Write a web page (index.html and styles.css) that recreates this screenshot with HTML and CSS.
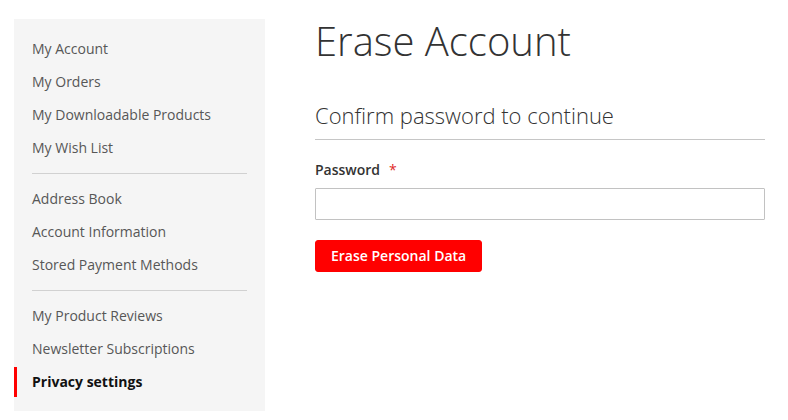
FILE: index.html
```html
<!DOCTYPE html>
<html lang="en">
<head>
<meta charset="utf-8">
<title>Erase Account</title>
<link rel="stylesheet" href="styles.css">
</head>
<body>
<div class="page">
  <aside class="sidebar">
    <ul class="nav">
      <li class="item"><a href="#">My Account</a></li>
      <li class="item"><a href="#">My Orders</a></li>
      <li class="item"><a href="#">My Downloadable Products</a></li>
      <li class="item"><a href="#">My Wish List</a></li>
      <li class="delimiter"></li>
      <li class="item"><a href="#">Address Book</a></li>
      <li class="item"><a href="#">Account Information</a></li>
      <li class="item"><a href="#">Stored Payment Methods</a></li>
      <li class="delimiter"></li>
      <li class="item"><a href="#">My Product Reviews</a></li>
      <li class="item"><a href="#">Newsletter Subscriptions</a></li>
      <li class="item current"><strong>Privacy settings</strong></li>
    </ul>
  </aside>
  <main class="main">
    <h1 class="page-title">Erase Account</h1>
    <div class="block-title">Confirm password to continue</div>
    <form class="form">
      <label class="label" for="pw">Password<span class="req">*</span></label>
      <input class="input" id="pw" type="password">
      <button class="btn" type="button">Erase Personal Data</button>
    </form>
  </main>
</div>
</body>
</html>
```
FILE: styles.css
```css
* { box-sizing: border-box; }
html, body { margin: 0; padding: 0; background: #fff; }
body {
  font-family: "Open Sans", "Liberation Sans", sans-serif;
  font-size: 14px;
  line-height: 20px;
  color: #333;
}
.page {
  display: flex;
  align-items: flex-start;
  padding: 19px 23px 0 14px;
  gap: 50px;
}
.sidebar {
  width: 251px;
  flex: none;
  background: #f5f5f5;
  padding: 15px 0 14px;
}
.nav {
  list-style: none;
  margin: 0;
  padding: 0;
  display: flex;
  flex-direction: column;
}
.item {
  margin: 0 0 3px;
}
.item:last-child { margin-bottom: 0; }
.item a, .item strong {
  display: block;
  padding: 5px 18px 5px 15px;
  border-left: 3px solid transparent;
  color: #575757;
  text-decoration: none;
  font-weight: 400;
}
.item.current strong {
  border-left-color: #ff0000;
  color: #111;
  font-weight: 700;
}
.delimiter {
  border-top: 1px solid #d1d1d1;
  margin: 7px 18px 10px;
}
.main {
  flex: 1;
  min-width: 0;
}
.page-title {
  margin: 0;
  font-size: 40px;
  line-height: 44px;
  font-weight: 300;
  color: #333;
}
.block-title {
  margin-top: 39px;
  font-size: 22px;
  line-height: 26px;
  font-weight: 300;
  color: #333;
  padding-bottom: 11px;
  border-bottom: 1px solid #c6c6c6;
}
.form {
  display: flex;
  flex-direction: column;
  align-items: flex-start;
  padding-top: 20px;
}
.label {
  font-weight: 600;
  color: #333;
}
.req {
  color: #e02b27;
  margin-left: 9px;
  font-weight: 400;
}
.input {
  margin-top: 8px;
  width: 100%;
  height: 32px;
  border: 1px solid #c2c2c2;
  border-radius: 1px;
  background: #fff;
  font: inherit;
  padding: 0 9px;
}
.btn {
  margin-top: 20px;
  background: #ff0000;
  border: 1px solid #ff0000;
  color: #fff;
  font-family: inherit;
  font-size: 14px;
  font-weight: 600;
  line-height: 18px;
  padding: 6px 15px;
  border-radius: 3px;
  cursor: pointer;
}
```
